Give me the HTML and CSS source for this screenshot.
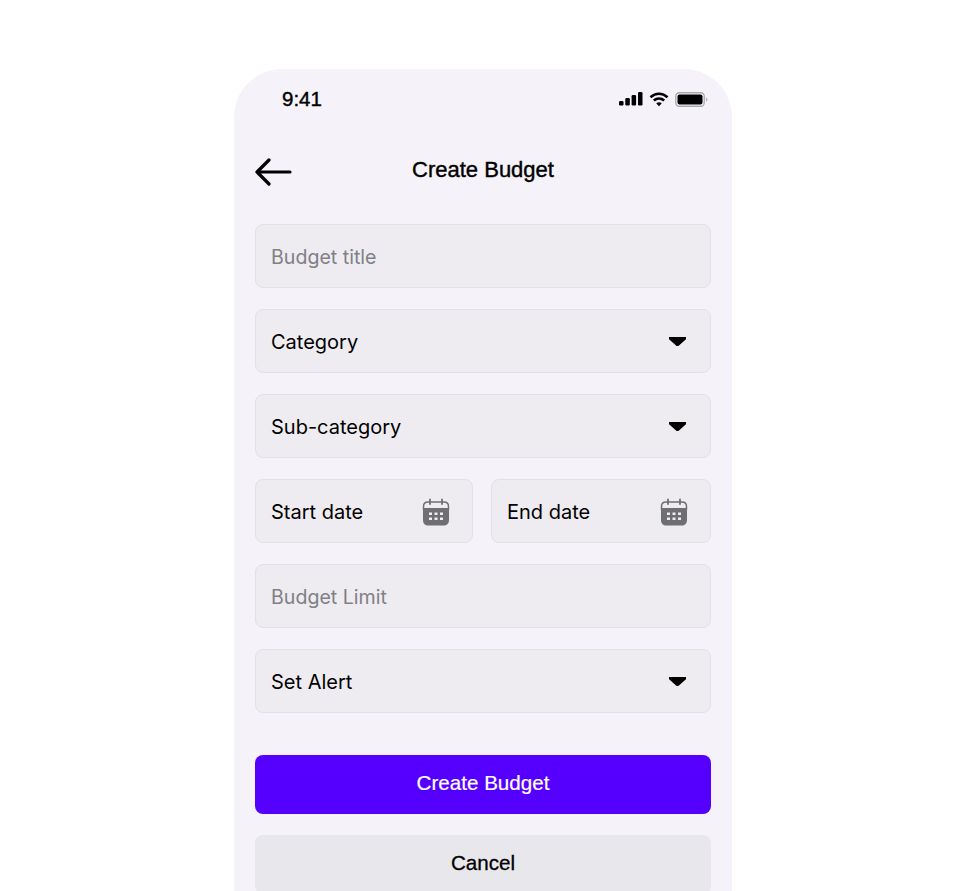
FILE: index.html
```html
<!DOCTYPE html>
<html lang="en">

<head>
    <meta charset="UTF-8">
    <meta name="viewport" content="width=device-width, initial-scale=1.0">
    <title>Create Budget</title>
    <link rel="stylesheet" href="styles.css">
</head>

<body>
    <div class="phone">
        <div class="status-bar">
            <span class="time">9:41</span>
            <div class="status-icons">
                <svg width="24" height="14" viewBox="0 0 24 14">
                    <rect x="0" y="9" width="4.500" height="4.500" rx="1.200" fill="#000" />
                    <rect x="6.300" y="6" width="4.500" height="7.500" rx="1.200" fill="#000" />
                    <rect x="12.600" y="3" width="4.500" height="10.500" rx="1.200" fill="#000" />
                    <rect x="19" y="0" width="4.500" height="13.500" rx="1.200" fill="#000" />
                </svg>
                <svg width="20" height="15" viewBox="0 0 20 15">
                    <path d="M1.500 5.200C6.500 .6 13.500 .6 18.500 5.200" fill="none" stroke="#000" stroke-width="2.600" />
                    <path d="M4.800 8.600C7.900 5.900 12.100 5.900 15.200 8.600" fill="none" stroke="#000" stroke-width="2.600" />
                    <path d="M7.200 11.200C8.900 9.900 11.100 9.900 12.800 11.200L10 14.200Z" fill="#000" />
                </svg>
                <svg width="33" height="15" viewBox="0 0 33 15">
                    <rect x="0.750" y="0.750" width="28.500" height="13.500" rx="3.500" fill="none" stroke="#a9a9ac" stroke-width="1.300" />
                    <rect x="2.500" y="2.500" width="25" height="10" rx="2" fill="#000" />
                    <path d="M31 5.500v4c.9-.3 1.400-1.100 1.400-2s-.5-1.700-1.400-2z" fill="#b5b5b8" />
                </svg>
            </div>
        </div>

        <div class="header">
            <svg class="back-arrow" width="38" height="28" viewBox="0 0 38 28">
                <path d="M36 14H3M15 2L3 14l12 12" fill="none" stroke="#000" stroke-width="3.200" stroke-linecap="round" stroke-linejoin="round" />
            </svg>
            <h1>Create Budget</h1>
        </div>

        <form class="budget-form">
            <div class="field placeholder">Budget title</div>
            <div class="field">
                <span>Category</span>
                <span class="caret"></span>
            </div>
            <div class="field">
                <span>Sub-category</span>
                <span class="caret"></span>
            </div>
            <div class="date-row">
                <div class="field date-start">
                    <span>Start date</span>
                    <svg class="calendar" width="28" height="28" viewBox="0 0 28 28">
                        <use href="#cal" />
                    </svg>
                </div>
                <div class="field date-end">
                    <span>End date</span>
                    <svg class="calendar" width="28" height="28" viewBox="0 0 28 28">
                        <use href="#cal" />
                    </svg>
                </div>
            </div>
            <div class="field placeholder">Budget Limit</div>
            <div class="field">
                <span>Set Alert</span>
                <span class="caret"></span>
            </div>

            <button type="button" class="btn btn-primary">Create Budget</button>
            <button type="button" class="btn btn-cancel">Cancel</button>
        </form>
    </div>

    <svg width="0" height="0" class="defs">
        <symbol id="cal" viewBox="0 0 28 28">
            <path d="M8 1.500V6M20 1.500V6" stroke="#6f6f73" stroke-width="1.800" stroke-linecap="round" />
            <path d="M1.500 11V8.500C1.500 5.500 3 4 6 4h16c3 0 4.500 1.500 4.500 4.500V11z" fill="none" stroke="#6f6f73" stroke-width="1.500" />
            <path fill-rule="evenodd" fill="#6f6f73" d="M1 10h26v12c0 3.500-2 5.500-5.500 5.500h-15C3 27.500 1 25.500 1 22zM7 14.500v2.500h3v-2.500zm5.500 0v2.500h3v-2.500zM18 14.500v2.500h3v-2.500zM7 19.500V22h3v-2.500zm5.500 0V22h3v-2.500zM18 19.500V22h3v-2.500z" />
        </symbol>
    </svg>
</body>

</html>
```

FILE: styles.css
```css
html,
body {
    margin: 0;
    padding: 0;
    height: 891px;
    overflow: hidden;
    background-color: #fff;
}

body {
    font-family: "Inter", "Liberation Sans", sans-serif;
    color: #000;
    padding-top: 69px;
    box-sizing: border-box;
}

.phone {
    width: 498px;
    height: 840px;
    margin-left: 234px;
    background-color: #f5f3f9;
    border-radius: 48px 48px 0 0;
    padding: 0 21px;
    box-sizing: border-box;
}

.status-bar {
    display: flex;
    align-items: center;
    justify-content: space-between;
    height: 60px;
    padding: 0 3px 0 27px;
}

.time {
    font-family: "Liberation Sans", sans-serif;
    font-size: 20.500px;
    font-weight: 500;
    -webkit-text-stroke: 0.4px #000;
}

.status-icons {
    display: flex;
    align-items: center;
    gap: 6px;
}

.header {
    display: flex;
    align-items: center;
    justify-content: center;
    position: relative;
    height: 62px;
    box-sizing: border-box;
    padding-top: 20px;
    margin-bottom: 33px;
}

.back-arrow {
    position: absolute;
    left: -1px;
    top: 29px;
}

.header h1 {
    margin: 0;
    font-family: "Liberation Sans", sans-serif;
    font-size: 22px;
    font-weight: 400;
    -webkit-text-stroke: 0.4px #000;
}

.budget-form {
    display: flex;
    flex-direction: column;
    gap: 21px;
}

.field {
    display: flex;
    align-items: center;
    justify-content: space-between;
    height: 64px;
    box-sizing: border-box;
    padding: 1px 24px 0 15px;
    font-family: "Inter", sans-serif;
    font-size: 20px;
    background-color: #eeecf1;
    border: 1px solid #e2e1e6;
    border-radius: 8px;
}

.placeholder {
    color: #808085;
    font-size: 19.600px;
}

.caret {
    width: 17px;
    height: 9px;
    background-color: #000;
    clip-path: polygon(0 0, 100% 0, 100% 25%, 55% 100%, 45% 100%, 0 25%);
}

.date-row {
    display: flex;
    justify-content: space-between;
}

.date-start {
    width: 218px;
    padding-right: 22px;
}

.date-end {
    width: 220px;
    padding-right: 22px;
}

.calendar {
    display: block;
}

.defs {
    position: absolute;
}

.btn {
    display: block;
    width: 100%;
    height: 59px;
    border: none;
    border-radius: 8px;
    padding: 0 0 4px;
    font-family: "Liberation Sans", sans-serif;
    font-size: 20.600px;
}

.btn-primary {
    margin-top: 21px;
    background-color: #5500ff;
    color: #fff;
    -webkit-text-stroke: 0.2px #fff;
}

.btn-cancel {
    background-color: #e8e7ec;
    color: #000;
    -webkit-text-stroke: 0.3px #000;
}
```
